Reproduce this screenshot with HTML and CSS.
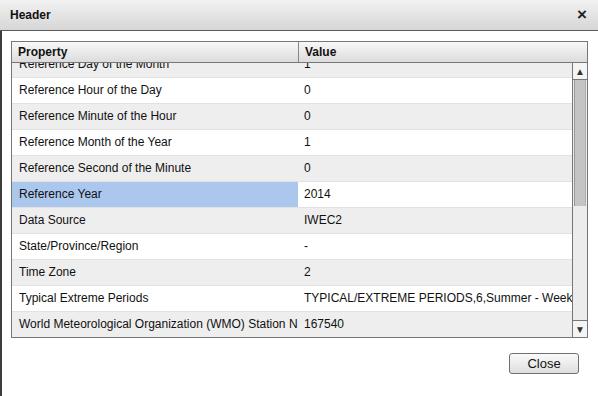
FILE: index.html
```html
<!DOCTYPE html>
<html lang="en">
<head>
  <meta charset="UTF-8" />
  <title>Header</title>
  <link rel="stylesheet" href="styles.css">
</head>
<body>
  <div class="dialog">
    <div class="titlebar">
      <span class="title">Header</span>
      <span class="close-x">&times;</span>
    </div>
    <div class="content">
      <div class="grid">
        <div class="grid-head">
          <div class="cell prop">Property</div>
          <div class="cell val">Value</div>
        </div>
        <div class="grid-body">
          <div class="rows">
            <div class="row alt"><div class="cell prop">Reference Day of the Month</div><div class="cell val">1</div></div>
            <div class="row"><div class="cell prop">Reference Hour of the Day</div><div class="cell val">0</div></div>
            <div class="row alt"><div class="cell prop">Reference Minute of the Hour</div><div class="cell val">0</div></div>
            <div class="row"><div class="cell prop">Reference Month of the Year</div><div class="cell val">1</div></div>
            <div class="row alt"><div class="cell prop">Reference Second of the Minute</div><div class="cell val">0</div></div>
            <div class="row"><div class="cell prop selected">Reference Year</div><div class="cell val">2014</div></div>
            <div class="row alt"><div class="cell prop">Data Source</div><div class="cell val">IWEC2</div></div>
            <div class="row"><div class="cell prop">State/Province/Region</div><div class="cell val">-</div></div>
            <div class="row alt"><div class="cell prop">Time Zone</div><div class="cell val">2</div></div>
            <div class="row"><div class="cell prop">Typical Extreme Periods</div><div class="cell val">TYPICAL/EXTREME PERIODS,6,Summer - Week Nearest Max Temperature For Period</div></div>
            <div class="row alt"><div class="cell prop">World Meteorological Organization (WMO) Station Number</div><div class="cell val">167540</div></div>
          </div>
          <div class="scrollbar">
            <div class="sb-btn">&#9650;</div>
            <div class="sb-track">
              <div class="sb-thumb"></div>
            </div>
            <div class="sb-btn down">&#9660;</div>
          </div>
        </div>
      </div>
      <div class="footer">
        <button class="btn">Close</button>
      </div>
    </div>
  </div>
</body>
</html>
```

FILE: styles.css
```css
body {
  margin: 0;
  padding: 0;
  font-family: 'Liberation Sans', Arial, sans-serif;
  font-size: 12px;
  color: #111;
  background: white;
}

.dialog {
  width: 598px;
  height: 396px;
  display: flex;
  flex-direction: column;
  overflow: hidden;
}

.titlebar {
  height: 30px;
  flex-shrink: 0;
  display: flex;
  align-items: center;
  justify-content: space-between;
  padding: 0 10px;
  background: linear-gradient(#f2f2f2, #d6d6d6);
  border-bottom: 1px solid #5a5a5a;
}

.title {
  font-weight: bold;
  color: #111;
}

.close-x {
  font-size: 17px;
  font-weight: bold;
  color: #222;
  margin-right: 1px;
}

.content {
  flex: 1;
  border-left: 2px solid #3c3c3c;
  padding: 10px 10px 0 9px;
  display: flex;
  flex-direction: column;
}

.grid {
  width: 575px;
  border: 1px solid #777;
  display: flex;
  flex-direction: column;
}

.grid-head {
  height: 20px;
  display: flex;
  background: linear-gradient(#f8f8f8, #dcdcdc);
  border-bottom: 1px solid #777;
  font-weight: bold;
}

.grid-head .cell {
  line-height: 20px;
  padding-left: 6px;
}

.cell {
  white-space: nowrap;
  overflow: hidden;
}

.prop {
  width: 279px;
  flex-shrink: 0;
  padding-left: 7px;
}

.grid-head .prop {
  width: 280px;
  border-right: 1px solid #888;
}

.val {
  flex: 1;
  padding-left: 6px;
}

.grid-body {
  height: 274px;
  display: flex;
  overflow: hidden;
}

.rows {
  flex: 1;
  min-width: 0;
  margin-top: -11px;
}

.row {
  height: 25px;
  display: flex;
  background: #fff;
  border-bottom: 1px solid #e2e2e2;
}

.row.alt {
  background: #eeeeee;
}

.row .cell {
  line-height: 25px;
}

.selected {
  background: #abc7ee;
}

.scrollbar {
  width: 14px;
  flex-shrink: 0;
  border-left: 1px solid #777;
  display: flex;
  flex-direction: column;
  background: #ececec;
}

.sb-btn {
  height: 16px;
  flex-shrink: 0;
  background: #f4f4f4;
  border-bottom: 1px solid #777;
  font-size: 10px;
  line-height: 17px;
  text-align: center;
  color: #333;
}

.sb-btn.down {
  border-bottom: none;
  border-top: 1px solid #777;
}

.sb-track {
  flex: 1;
  padding: 0 1px;
}

.sb-thumb {
  height: 126px;
  background: #c4c4c4;
  border-left: 1px solid #999;
  border-right: 1px solid #b0b0b0;
}

.footer {
  display: flex;
  justify-content: flex-end;
  padding-top: 15px;
  width: 568px;
}

.btn {
  width: 70px;
  height: 21px;
  padding: 0;
  font-family: 'Liberation Sans', Arial, sans-serif;
  font-size: 13px;
  color: #111;
  border: 1px solid #707070;
  border-radius: 3px;
  background: linear-gradient(#fafafa, #dedede);
}
```
